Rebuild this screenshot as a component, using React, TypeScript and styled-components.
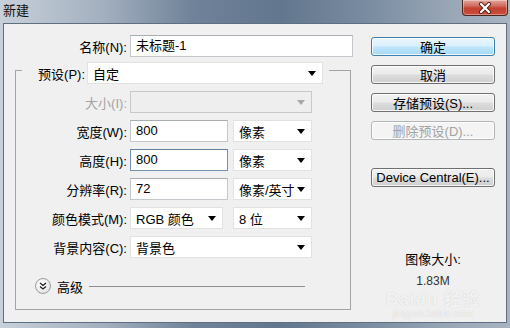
import React from "react";
import styled, { createGlobalStyle } from "styled-components";

const GlobalStyle = createGlobalStyle`
  html, body {
    margin: 0;
    padding: 0;
  }
  body {
    font-family: "Liberation Sans", "Noto Sans CJK SC", sans-serif;
    font-size: 13px;
    color: #000;
  }
`;

const Window = styled.div`
  position: relative;
  width: 510px;
  height: 328px;
  overflow: hidden;
  display: flex;
  flex-direction: column;
  background: linear-gradient(
    90deg,
    #c8d0da 0%,
    #a3b0bf 20%,
    #6f8299 38%,
    #62768d 55%,
    #7a8ca1 72%,
    #98a6b6 88%,
    #a8b4c1 100%
  );
`;

const TitleBar = styled.div`
  height: 23px;
  display: flex;
  align-items: flex-start;
  padding-left: 3px;
`;

const Title = styled.span`
  font-size: 13px;
  line-height: 21px;
  color: #111;
`;

const CloseButton = styled.div`
  margin-left: auto;
  margin-right: 2px;
  width: 46px;
  height: 16px;
  box-sizing: border-box;
  border: 1px solid #4b2620;
  border-top: none;
  border-radius: 0 0 4px 4px;
  background: linear-gradient(#e3a79f 0%, #d06a5e 40%, #c2402f 55%, #c94f3c 100%);
  box-shadow: inset 0 0 0 1px rgba(255, 255, 255, 0.35);
  display: flex;
  align-items: center;
  justify-content: center;
`;

const Content = styled.div`
  flex: 1;
  margin: 0 3px 5px 3px;
  border: 1px solid #5e6f82;
  background: #f0f0f0;
  display: flex;
`;

const LeftPane = styled.div`
  width: 367px;
  padding-top: 11px;
  box-sizing: border-box;
`;

const RightPane = styled.div`
  width: 124px;
  padding-top: 13px;
  display: flex;
  flex-direction: column;
`;

const Row = styled.div`
  display: flex;
  align-items: center;
  height: 22px;
  gap: 3px;
`;

const FieldLabel = styled.span<{ $width: number; $disabled?: boolean }>`
  width: ${(p) => p.$width}px;
  text-align: right;
  white-space: nowrap;
  color: ${(p) => (p.$disabled ? "#a3a3a3" : "#000")};
`;

const Controls = styled.div<{ $gap: number }>`
  display: flex;
  gap: ${(p) => p.$gap}px;
`;

const Input = styled.div<{ $width: number; $focused?: boolean }>`
  width: ${(p) => p.$width}px;
  height: 22px;
  box-sizing: border-box;
  border: 1px solid ${(p) => (p.$focused ? "#7393b3" : "#c4c8cd")};
  border-top-color: ${(p) => (p.$focused ? "#5f7fa0" : "#a9aeb4")};
  background: #fff;
  padding-left: 5px;
  line-height: 20px;
  white-space: nowrap;
`;

const Select = styled.div<{ $width: number; $disabled?: boolean }>`
  width: ${(p) => p.$width}px;
  height: 22px;
  box-sizing: border-box;
  border: 1px solid ${(p) => (p.$disabled ? "#c9c9c9" : "#e2e2e2")};
  background: ${(p) => (p.$disabled ? "#eeeeee" : "#fff")};
  display: flex;
  align-items: center;
  justify-content: space-between;
  padding: 0 6px 0 5px;
  white-space: nowrap;
`;

const Caret = styled.span<{ $disabled?: boolean }>`
  width: 0;
  height: 0;
  border-left: 4px solid transparent;
  border-right: 4px solid transparent;
  border-top: 5px solid ${(p) => (p.$disabled ? "#a8a8a8" : "#000")};
`;

const Group = styled.div`
  margin: 13px 0 0 11px;
  width: 336px;
  box-sizing: border-box;
  border: 1px solid #a4a4a4;
  padding-bottom: 15px;
`;

const Legend = styled.div`
  display: flex;
  align-items: center;
  gap: 2px;
  width: fit-content;
  height: 22px;
  margin: -9px 0 0 6px;
  padding-right: 6px;
  background: #f0f0f0;
`;

const Rows = styled.div`
  display: flex;
  flex-direction: column;
  gap: 7px;
  margin-top: 7px;
`;

const Advanced = styled.div`
  display: flex;
  align-items: center;
  height: 16px;
  margin: 20px 0 0 19px;
`;

const RoundToggle = styled.div`
  width: 16px;
  height: 16px;
  box-sizing: border-box;
  border-radius: 50%;
  border: 1px solid #9c9c9c;
  background: radial-gradient(circle at 40% 35%, #ffffff 0%, #f2f2f2 45%, #d6d6d6 100%);
  display: flex;
  align-items: center;
  justify-content: center;
`;

const AdvancedText = styled.span`
  margin-left: 6px;
`;

const Rule = styled.div`
  margin-left: 6px;
  width: 216px;
  height: 1px;
  background: #8f8f8f;
`;

const Button = styled.div<{ $variant?: "default" | "disabled"; $space?: number }>`
  height: 19px;
  box-sizing: border-box;
  margin-top: ${(p) => p.$space ?? 0}px;
  border-radius: 3px;
  display: flex;
  align-items: center;
  justify-content: center;
  white-space: nowrap;
  border: 1px solid
    ${(p) =>
      p.$variant === "default" ? "#3c7fb1" : p.$variant === "disabled" ? "#b3b6b9" : "#707070"};
  color: ${(p) => (p.$variant === "disabled" ? "#a2a2a2" : "#000")};
  background: ${(p) =>
    p.$variant === "default"
      ? "linear-gradient(#eaf6fd 0%, #d9f0fc 48%, #bee6fd 52%, #a7d9f5 100%)"
      : p.$variant === "disabled"
      ? "#f4f4f4"
      : "linear-gradient(#f2f2f2 0%, #ebebeb 48%, #dddddd 52%, #cfcfcf 100%)"};
  box-shadow: inset 0 0 0 1px rgba(255, 255, 255, 0.8);
`;

const SizeInfo = styled.div`
  margin-top: 65px;
  display: flex;
  flex-direction: column;
  align-items: center;
  gap: 5px;
  line-height: 16px;
`;

const SizeValue = styled.span`
  color: #333;
  font-size: 12px;
`;

const Watermark = styled.div`
  position: absolute;
  right: 30px;
  bottom: 8px;
  display: flex;
  flex-direction: column;
  align-items: center;
  color: rgba(255, 255, 255, 0.8);
  text-shadow: 0 0 1px rgba(130, 130, 130, 0.4);
  pointer-events: none;
`;

const MarkBrand = styled.span`
  font-size: 17px;
  font-weight: bold;
  line-height: 17px;
  letter-spacing: 1px;
`;

const MarkSite = styled.span`
  font-size: 10px;
  line-height: 12px;
`;

const units = ["像素", "像素", "像素/英寸"];

const App: React.FC = () => {
  return (
    <>
      <GlobalStyle />
      <Window>
        <TitleBar>
          <Title>新建</Title>
          <CloseButton>
            <svg width="14" height="12" viewBox="0 0 14 12">
              <path d="M3 2 L11 10 M11 2 L3 10" stroke="#5a1f18" strokeWidth="4" strokeLinecap="round" />
              <path d="M3 2 L11 10 M11 2 L3 10" stroke="#fff" strokeWidth="2.2" strokeLinecap="round" />
            </svg>
          </CloseButton>
        </TitleBar>
        <Content>
          <LeftPane>
            <Row>
              <FieldLabel $width={123}>名称(N):</FieldLabel>
              <Input $width={223}>未标题-1</Input>
            </Row>
            <Group>
              <Legend>
                <FieldLabel $width={63}>预设(P):</FieldLabel>
                <Select $width={236}>
                  自定
                  <Caret />
                </Select>
              </Legend>
              <Rows>
                <Row>
                  <FieldLabel $width={111} $disabled>大小(I):</FieldLabel>
                  <Select $width={182} $disabled>
                    <span />
                    <Caret $disabled />
                  </Select>
                </Row>
                <Row>
                  <FieldLabel $width={111}>宽度(W):</FieldLabel>
                  <Controls $gap={5}>
                    <Input $width={98}>800</Input>
                    <Select $width={79}>
                      {units[0]}
                      <Caret />
                    </Select>
                  </Controls>
                </Row>
                <Row>
                  <FieldLabel $width={111}>高度(H):</FieldLabel>
                  <Controls $gap={5}>
                    <Input $width={98} $focused>800</Input>
                    <Select $width={79}>
                      {units[1]}
                      <Caret />
                    </Select>
                  </Controls>
                </Row>
                <Row>
                  <FieldLabel $width={111}>分辨率(R):</FieldLabel>
                  <Controls $gap={5}>
                    <Input $width={98}>72</Input>
                    <Select $width={79}>
                      {units[2]}
                      <Caret />
                    </Select>
                  </Controls>
                </Row>
                <Row>
                  <FieldLabel $width={111}>颜色模式(M):</FieldLabel>
                  <Controls $gap={10}>
                    <Select $width={93}>
                      RGB 颜色
                      <Caret />
                    </Select>
                    <Select $width={79}>
                      8 位
                      <Caret />
                    </Select>
                  </Controls>
                </Row>
                <Row>
                  <FieldLabel $width={111}>背景内容(C):</FieldLabel>
                  <Select $width={182}>
                    背景色
                    <Caret />
                  </Select>
                </Row>
              </Rows>
              <Advanced>
                <RoundToggle>
                  <svg width="8" height="8" viewBox="0 0 8 8">
                    <path d="M1 1 L4 3.5 L7 1 M1 4.5 L4 7 L7 4.5" stroke="#222" strokeWidth="1.3" fill="none" />
                  </svg>
                </RoundToggle>
                <AdvancedText>高级</AdvancedText>
                <Rule />
              </Advanced>
            </Group>
          </LeftPane>
          <RightPane>
            <Button $variant="default">确定</Button>
            <Button $space={9}>取消</Button>
            <Button $space={9}>存储预设(S)...</Button>
            <Button $space={9} $variant="disabled">删除预设(D)...</Button>
            <Button $space={28}>Device Central(E)...</Button>
            <SizeInfo>
              <span>图像大小:</span>
              <SizeValue>1.83M</SizeValue>
            </SizeInfo>
          </RightPane>
        </Content>
        <Watermark>
          <MarkBrand>Baidu 经验</MarkBrand>
          <MarkSite>jingyan.baidu.com</MarkSite>
        </Watermark>
      </Window>
    </>
  );
};

export default App;
